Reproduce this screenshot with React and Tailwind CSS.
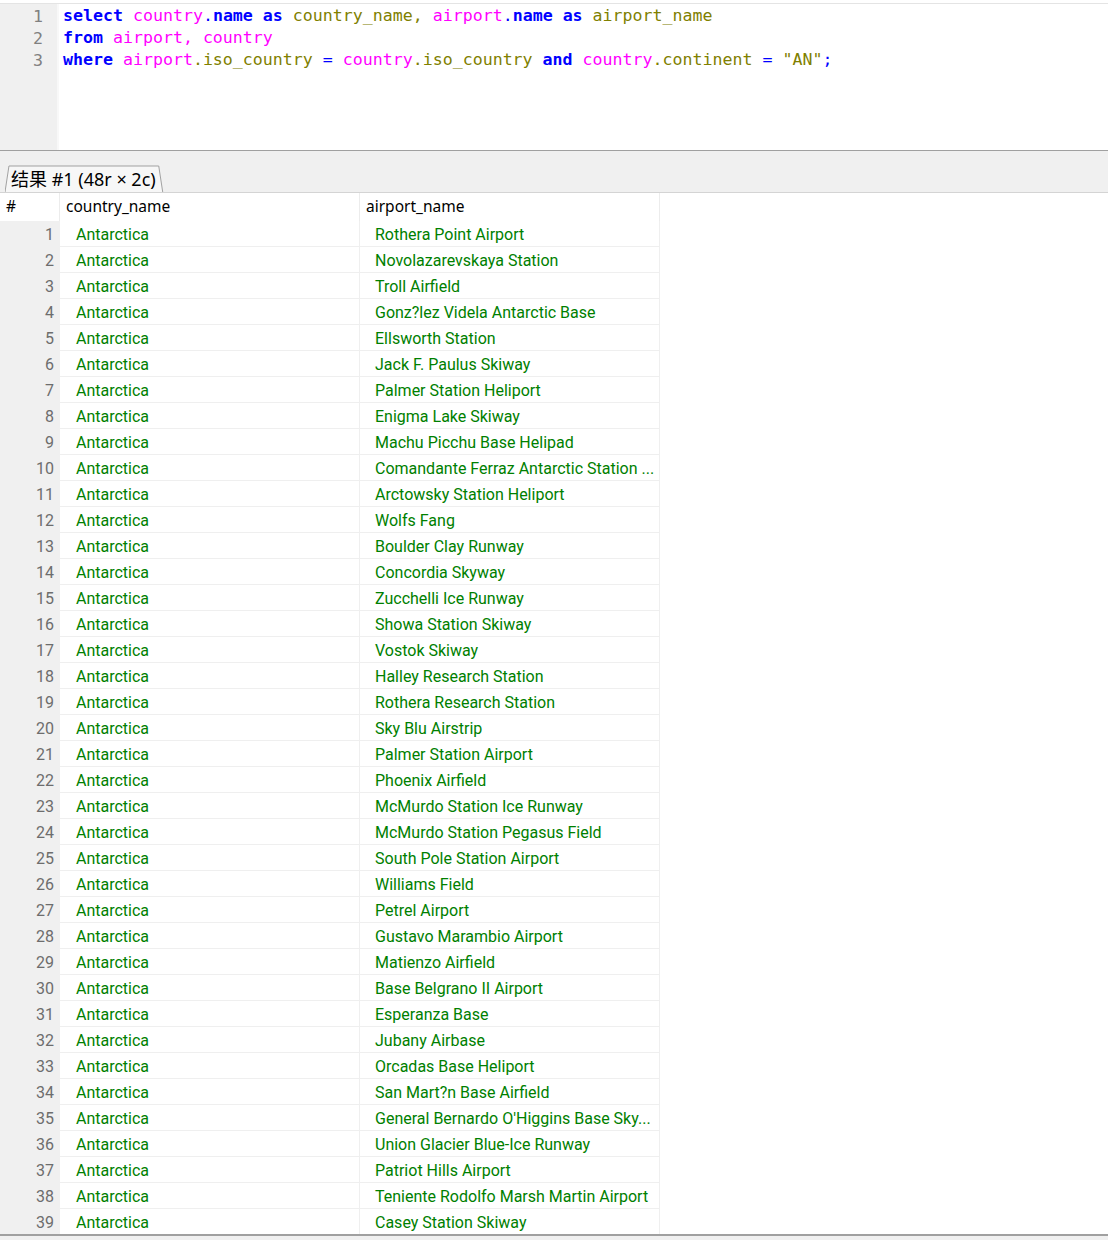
import React from 'react';

const airports = [
  'Rothera Point Airport',
  'Novolazarevskaya Station',
  'Troll Airfield',
  'Gonz?lez Videla Antarctic Base',
  'Ellsworth Station',
  'Jack F. Paulus Skiway',
  'Palmer Station Heliport',
  'Enigma Lake Skiway',
  'Machu Picchu Base Helipad',
  'Comandante Ferraz Antarctic Station ...',
  'Arctowsky Station Heliport',
  'Wolfs Fang',
  'Boulder Clay Runway',
  'Concordia Skyway',
  'Zucchelli Ice Runway',
  'Showa Station Skiway',
  'Vostok Skiway',
  'Halley Research Station',
  'Rothera Research Station',
  'Sky Blu Airstrip',
  'Palmer Station Airport',
  'Phoenix Airfield',
  'McMurdo Station Ice Runway',
  'McMurdo Station Pegasus Field',
  'South Pole Station Airport',
  'Williams Field',
  'Petrel Airport',
  'Gustavo Marambio Airport',
  'Matienzo Airfield',
  'Base Belgrano II Airport',
  'Esperanza Base',
  'Jubany Airbase',
  'Orcadas Base Heliport',
  'San Mart?n Base Airfield',
  "General Bernardo O'Higgins Base Sky...",
  'Union Glacier Blue-Ice Runway',
  'Patriot Hills Airport',
  'Teniente Rodolfo Marsh Martin Airport',
  'Casey Station Skiway',
];

// syntax colour helpers
const K = ({ children }) => <span className="font-bold text-[#0000ff]">{children}</span>;
const T = ({ children }) => <span className="text-[#ff00ff]">{children}</span>;
const F = ({ children }) => <span className="text-[#808000]">{children}</span>;
const P = ({ children }) => <span className="text-[#0000ff]">{children}</span>;

function Editor() {
  return (
    <div className="flex h-[147px] border-b border-[#a0a0a0] bg-white">
      <div className="w-[59px] shrink-0 bg-[#f0f0f0] pt-[2px] pr-[14px] text-right text-[#808080] border-r-2 border-[#f8f8f8] font-['DejaVu_Sans_Mono',monospace] text-[16.6px] leading-[22px]">
        <div>1</div>
        <div>2</div>
        <div>3</div>
      </div>
      <div className="pl-[4px] pt-[1px] whitespace-pre font-['DejaVu_Sans_Mono',monospace] text-[16.6px] leading-[22px]">
        <div>
          <K>select</K> <T>country</T><P>.</P><K>name</K> <K>as</K> <F>country_name,</F> <T>airport</T><P>.</P><K>name</K> <K>as</K> <F>airport_name</F>
        </div>
        <div>
          <K>from</K> <T>airport, country</T>
        </div>
        <div>
          <K>where</K> <T>airport</T><F>.iso_country</F> <P>=</P> <T>country</T><F>.iso_country</F> <K>and</K> <T>country</T><F>.continent</F> <P>=</P> <F>"AN"</F><P>;</P>
        </div>
      </div>
    </div>
  );
}

function TabBar() {
  return (
    <div className="h-[42px] bg-[#f0f0f0] border-b border-[#d4d4d4] flex items-end pl-[5px]">
      <div className="relative h-[27px] pl-[6px] pr-[8px] flex items-center">
        <svg className="absolute inset-0 w-full h-full" viewBox="0 0 160 27" preserveAspectRatio="none">
          <path d="M0 27 L4 1 L155 1 L159 27" fill="#f7f7f7" stroke="#a0a0a0" strokeWidth="1" />
        </svg>
        <span className="relative text-[18px] text-black font-['Noto_Sans','Noto_Sans_CJK_SC',sans-serif] leading-none">
          结果 #1 (48r × 2c)
        </span>
      </div>
    </div>
  );
}

function Grid() {
  return (
    <div className="font-['Roboto',sans-serif]">
      <div className="flex h-[28px] items-center bg-white text-[15.5px] text-black font-['Noto_Sans',sans-serif]">
        <div className="w-[60px] pl-[6px] h-full flex items-center border-r border-[#ececec]">#</div>
        <div className="w-[300px] pl-[6px] h-full flex items-center border-r border-[#ececec]">country_name</div>
        <div className="w-[300px] pl-[6px] h-full flex items-center border-r border-[#ececec]">airport_name</div>
      </div>
      {airports.map((name, i) => (
        <div key={i} className="flex h-[26px] text-[16px]">
          <div className="w-[60px] bg-[#f0f0f0] pr-[6px] pt-[2px] text-right text-[#6d6d6d] flex items-center justify-end">
            {i + 1}
          </div>
          <div className="w-[300px] pl-[16px] pt-[2px] flex items-center text-[#008000] border-r border-b border-[#efefef]">
            Antarctica
          </div>
          <div className="w-[300px] pl-[15px] pt-[2px] flex items-center text-[#008000] whitespace-nowrap overflow-hidden border-r border-b border-[#efefef]">
            {name}
          </div>
        </div>
      ))}
    </div>
  );
}

export default function App() {
  return (
    <div className="w-[1108px] h-[1240px] bg-white overflow-hidden flex flex-col">
      <div className="h-[3px] bg-white border-b border-[#e4e4e4] box-content"></div>
      <Editor />
      <TabBar />
      <div className="h-[1043px] shrink-0 overflow-hidden border-b-2 border-[#a0a0a0]">
        <Grid />
      </div>
      <div className="flex-1 bg-[#f0f0f0]"></div>
    </div>
  );
}
